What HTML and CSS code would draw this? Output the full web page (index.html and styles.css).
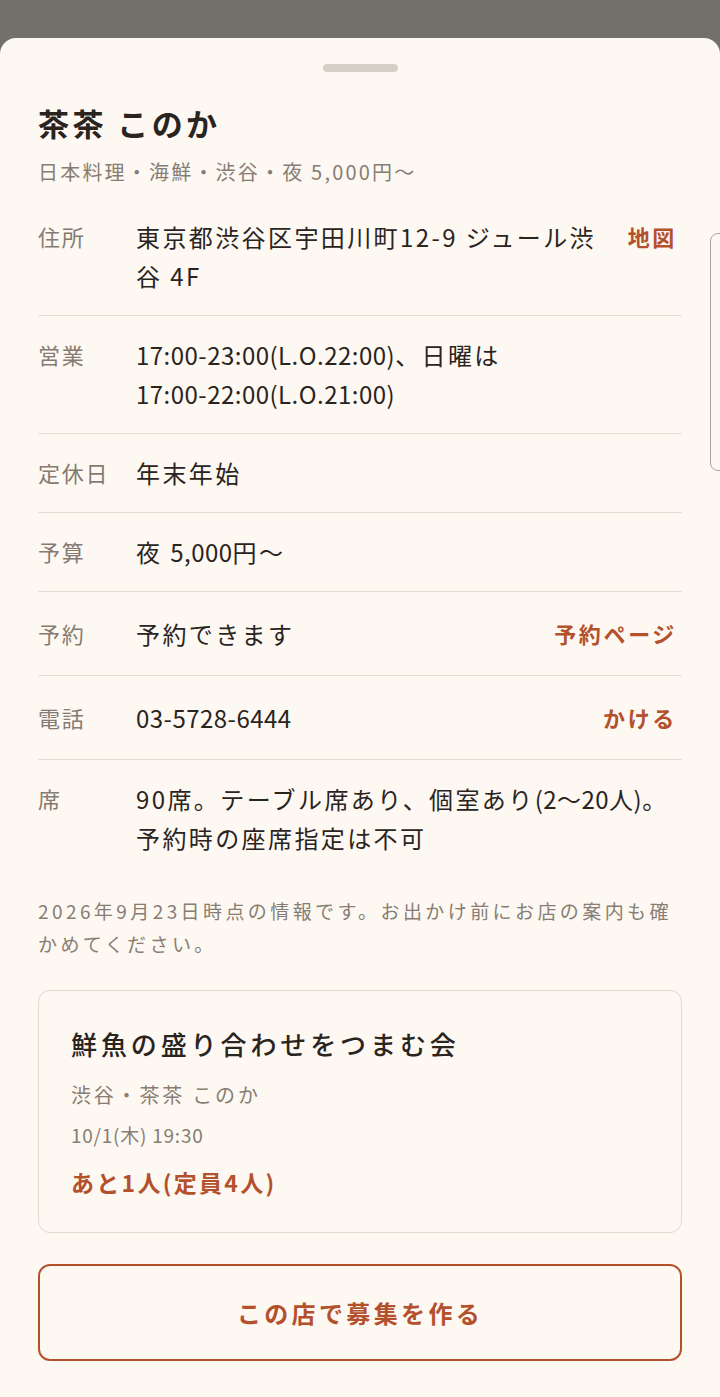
FILE: index.html
```html
<!DOCTYPE html>
<html lang="ja">
<head>
    <meta charset="UTF-8">
    <meta name="viewport" content="width=device-width, initial-scale=1.0">
    <title>茶茶 このか</title>
    <link rel="stylesheet" href="styles.css">
</head>
<body>
    <div class="backdrop"></div>
    <div class="sheet">
        <div class="handle"></div>
        <div class="edge-tab"></div>

        <h1 class="shop-name">茶茶 このか</h1>
        <div class="shop-sub">日本料理・海鮮・渋谷・夜 5,000円～</div>

        <div class="info">
            <div class="row">
                <div class="label">住所</div>
                <div class="value">東京都渋谷区宇田川町12-9 ジュール渋谷 4F</div>
                <a class="link" href="#">地図</a>
            </div>
            <div class="row">
                <div class="label">営業</div>
                <div class="value"><span class="num">17:00-23:00(L.O.22:00)</span>、日曜は <span class="num">17:00-22:00(L.O.21:00)</span></div>
            </div>
            <div class="row">
                <div class="label">定休日</div>
                <div class="value">年末年始</div>
            </div>
            <div class="row">
                <div class="label">予算</div>
                <div class="value">夜 <span class="num">5,000</span>円～</div>
            </div>
            <div class="row center">
                <div class="label">予約</div>
                <div class="value">予約できます</div>
                <a class="link" href="#">予約ページ</a>
            </div>
            <div class="row center">
                <div class="label">電話</div>
                <div class="value"><span class="num">03-5728-6444</span></div>
                <a class="link" href="#">かける</a>
            </div>
            <div class="row last">
                <div class="label">席</div>
                <div class="value">90席。テーブル席あり、個室あり<span class="num">(2～20人)</span>。<br>予約時の座席指定は不可</div>
            </div>
        </div>

        <p class="note">2026年9月23日時点の情報です。お出かけ前にお店の案内も確かめてください。</p>

        <div class="event-card">
            <div class="event-title">鮮魚の盛り合わせをつまむ会</div>
            <div class="event-place">渋谷・茶茶 このか</div>
            <div class="event-date">10/1(木) 19:30</div>
            <div class="event-seats">あと1人(定員4人)</div>
        </div>

        <button class="create-btn">この店で募集を作る</button>
    </div>
</body>
</html>
```

FILE: styles.css
```css
body {
    margin: 0;
    background: #72706b;
    font-family: "Noto Sans CJK JP", "Noto Sans", sans-serif;
    color: #2a241f;
    overflow: hidden;
}
.backdrop {
    height: 38px;
}
.sheet {
    position: relative;
    background: #fdf8f1;
    border-radius: 16px 16px 0 0;
    padding: 26px 38px 37px;
    min-height: 1296px;
}
.handle {
    width: 75px;
    height: 8px;
    border-radius: 4px;
    background: #d6cfc5;
    margin: 0 auto;
}
.edge-tab {
    position: absolute;
    top: 195px;
    right: -12px;
    width: 20px;
    height: 236px;
    border: 1.5px solid #aaa69f;
    border-radius: 8px;
    background: #fcf8f1;
}
.shop-name {
    margin: 31px 0 0;
    font-size: 31px;
    line-height: 40px;
    font-weight: 700;
    letter-spacing: 0.11em;
}
.shop-sub {
    margin-top: 13px;
    font-size: 20px;
    line-height: 32px;
    color: #877d74;
    letter-spacing: 0.11em;
}
.info {
    margin-top: 10px;
}
.row {
    display: grid;
    grid-template-columns: 98px 1fr auto;
    align-items: start;
    padding: 19px 0 20px;
    border-bottom: 1px solid #e3ddd2;
}
.row.center {
    align-items: center;
}
.row.last {
    border-bottom: none;
}
.label {
    font-size: 22px;
    line-height: 39px;
    color: #857b72;
    letter-spacing: 0.08em;
}
.value {
    font-size: 24px;
    line-height: 39px;
    letter-spacing: 0.1em;
}
.num {
    letter-spacing: 0.02em;
    white-space: nowrap;
}
.link {
    display: flex;
    align-items: center;
    min-height: 44px;
    margin: -3px 0 0 12px;
    padding: 0 5px 0 8px;
    font-size: 22px;
    font-weight: 700;
    color: #b4512d;
    text-decoration: none;
    letter-spacing: 0.12em;
}
.row.center .link {
    margin-top: 0;
}
.note {
    margin: 17px 0 0;
    font-size: 19px;
    line-height: 33px;
    color: #877d74;
    letter-spacing: 0.18em;
}
.event-card {
    margin-top: 30px;
    border: 1.5px solid #e0dace;
    border-radius: 12px;
    padding: 32px 32px 33px;
}
.event-title {
    font-size: 26px;
    line-height: 42px;
    font-weight: 500;
    letter-spacing: 0.15em;
}
.event-place {
    margin-top: 14px;
    font-size: 20px;
    line-height: 32px;
    color: #877d74;
    letter-spacing: 0.14em;
}
.event-date {
    margin-top: 8px;
    font-size: 19px;
    line-height: 32px;
    color: #877d74;
    letter-spacing: 0.04em;
}
.event-seats {
    margin-top: 14px;
    font-size: 23px;
    line-height: 34px;
    font-weight: 700;
    color: #b4512d;
    letter-spacing: 0.1em;
}
.create-btn {
    display: block;
    width: 100%;
    height: 97px;
    margin-top: 31px;
    border: 2px solid #b4512d;
    border-radius: 12px;
    background: transparent;
    font-family: inherit;
    font-size: 24px;
    font-weight: 700;
    color: #b4512d;
    letter-spacing: 0.14em;
    cursor: pointer;
}
```
